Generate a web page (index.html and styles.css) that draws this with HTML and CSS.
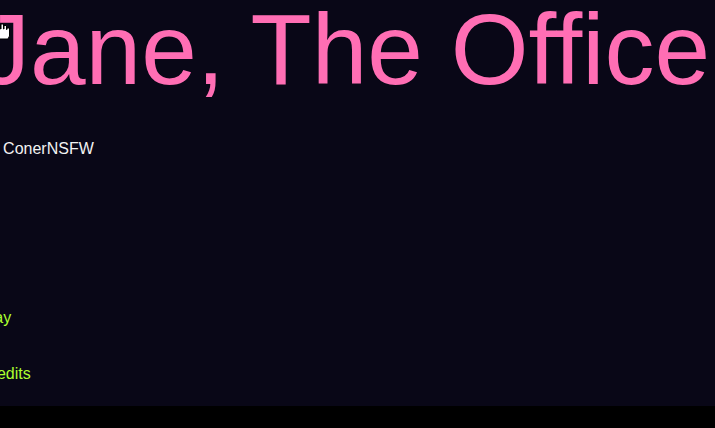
FILE: index.html
```html
<!DOCTYPE html>
<html lang="en">
<head>
<meta charset="utf-8">
<title>Jane, The Office</title>
<link rel="stylesheet" href="styles.css">
</head>
<body>
<div class="page">
  <div class="content">
    <h1 class="title">Jane, The Office</h1>
    <p class="byline">By ConerNSFW</p>
    <nav class="menu">
      <a class="menu-link" href="#">Play</a>
      <a class="menu-link" href="#">Credits</a>
    </nav>
  </div>
  <svg class="cursor" width="12" height="18" viewBox="0 0 12 18" aria-hidden="true">
    <path d="M-4 10 V5 H-2 V2 H0.5 V6 H1 V1 H3.5 V6 H4 V2.5 H6.5 V6.5 H7 V5 H9.5 V13 L8 16 H-4 Z" fill="#fff" stroke="#000" stroke-width="1"/>
  </svg>
</div>
</body>
</html>
```

FILE: styles.css
```css
html, body {
  margin: 0;
  padding: 0;
  background: #000;
}

.page {
  position: relative;
  height: 406px;
  background: #090717;
  overflow: hidden;
  font-family: "Liberation Sans", Arial, sans-serif;
}

.content {
  margin: -8px 0 0 -20px;
  display: flex;
  flex-direction: column;
  align-items: flex-start;
}

.title {
  margin: 0;
  font-size: 100px;
  font-weight: normal;
  line-height: 115px;
  color: #ff6eb4;
  white-space: nowrap;
}

.byline {
  margin: 33px 0 0;
  font-size: 16px;
  line-height: 18px;
  color: #f2f2f2;
}

.menu {
  margin-top: 151px;
  display: flex;
  flex-direction: column;
  gap: 38px;
}

.menu-link {
  font-size: 16px;
  line-height: 18px;
  color: #adff2f;
  text-decoration: none;
}

.cursor {
  position: absolute;
  left: 0;
  top: 23px;
}
```
